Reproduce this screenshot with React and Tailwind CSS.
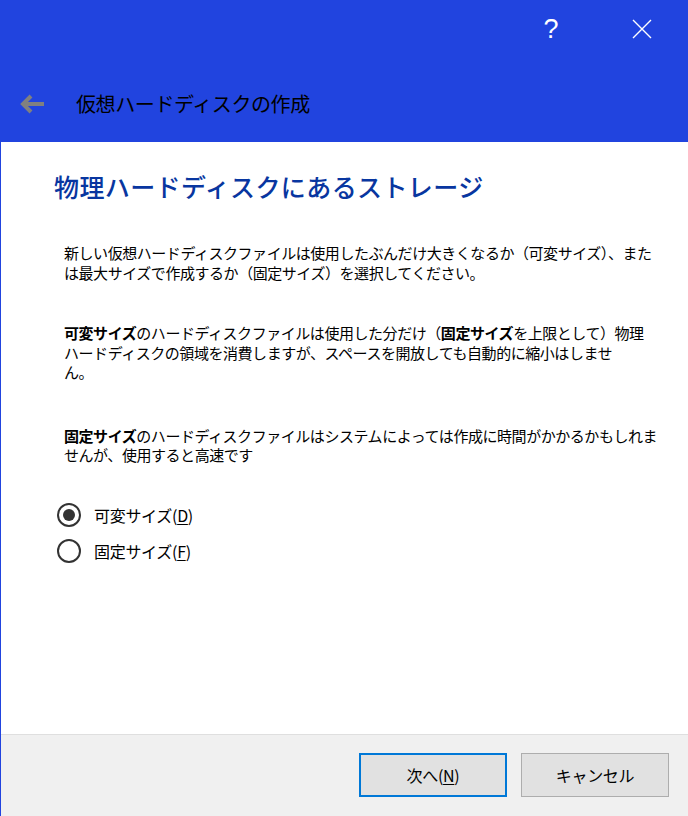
import React from "react";

const jp = { fontFamily: '"Noto Sans CJK JP", "Noto Sans", sans-serif' };

function Radio({ checked, label, letter }) {
  return (
    <div className="flex items-center h-[24px]">
      <div className="w-[24px] h-[24px] rounded-full border-2 border-[#333333] flex items-center justify-center bg-white">
        {checked && <div className="w-[12px] h-[12px] rounded-full bg-[#333333]" />}
      </div>
      <div className="ml-[13px] text-[16px] leading-[24px] text-black tracking-[-0.3px]">
        {label}(<span className="underline underline-offset-2">{letter}</span>)
      </div>
    </div>
  );
}

export default function App() {
  return (
    <div
      className="w-[688px] h-[816px] flex flex-col border-l border-[#2144df] bg-white overflow-hidden"
      style={jp}
    >
      {/* header */}
      <div className="h-[142px] bg-[#2144df] flex flex-col shrink-0">
        <div className="h-[58px] flex items-center justify-end pr-[23px] gap-[45px]">
          <div
            className="w-[46px] text-center text-white text-[27px] leading-[28px]"
            style={{ fontFamily: '"Liberation Sans", sans-serif' }}
          >
            ?
          </div>
          <div className="w-[46px] flex justify-center">
            <svg width="20" height="20" viewBox="0 0 20 20">
              <path d="M1 1 L19 19 M19 1 L1 19" stroke="white" strokeWidth="1.4" />
            </svg>
          </div>
        </div>
        <div className="flex pt-[34px] h-[84px] items-start">
          <div className="flex items-center h-[24px]">
            <svg className="ml-[19px]" width="25" height="20" viewBox="0 0 25 20">
              <path d="M24 10 H5" stroke="#808080" strokeWidth="4" />
              <path d="M11 2 L3 10 L11 18" stroke="#808080" strokeWidth="4" fill="none" />
            </svg>
            <div className="ml-[31px] text-[20px] leading-[24px] text-black tracking-[-0.4px]">
              仮想ハードディスクの作成
            </div>
          </div>
        </div>
      </div>

      {/* content */}
      <div className="flex-1 pt-[29px] pl-[53px] pr-[20px]">
        <div className="text-[25px] leading-[30px] text-[#0836a0] tracking-[0.4px] font-medium">
          物理ハードディスクにあるストレージ
        </div>
        <div className="pl-[10px] mt-[42px] text-[15px] leading-[19.5px] text-black tracking-[-0.45px] whitespace-nowrap">
          <p>
            新しい仮想ハードディスクファイルは使用したぶんだけ大きくなるか（可変サイズ）、また
            <br />
            は最大サイズで作成するか（固定サイズ）を選択してください。
          </p>
          <p className="mt-[41px]">
            <b>可変サイズ</b>のハードディスクファイルは使用した分だけ（<b>固定サイズ</b>を上限として）物理
            <br />
            ハードディスクの領域を消費しますが、スペースを開放しても自動的に縮小はしませ
            <br />
            ん。
          </p>
          <p className="mt-[44px]">
            <b>固定サイズ</b>のハードディスクファイルはシステムによっては作成に時間がかかるかもしれま
            <br />
            せんが、使用すると高速です
          </p>
        </div>
        <div className="mt-[38px] pl-[3px] flex flex-col gap-[12px]">
          <Radio checked label="可変サイズ" letter="D" />
          <Radio label="固定サイズ" letter="F" />
        </div>
      </div>

      {/* footer */}
      <div className="h-[82px] shrink-0 bg-[#f0f0f0] border-t border-[#dfdfdf] flex justify-end items-start pt-[18px] pr-[19px] gap-[14px]">
        <button className="w-[148px] h-[44px] bg-[#e1e1e1] border-2 border-[#0078d7] text-[16px] text-black tracking-[-0.3px]">
          次へ(<span className="underline underline-offset-2">N</span>)
        </button>
        <button className="w-[148px] h-[44px] bg-[#e1e1e1] border border-[#adadad] text-[16px] text-black tracking-[-0.3px]">
          キャンセル
        </button>
      </div>
    </div>
  );
}
